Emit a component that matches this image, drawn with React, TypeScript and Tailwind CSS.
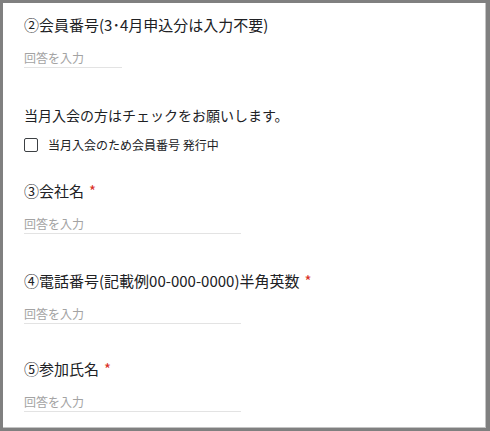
import React from 'react';

const font = { fontFamily: '"Noto Sans CJK JP", "Noto Sans", sans-serif' };

const Required = () => <span className="ml-[5px] text-[15px] text-[#d93025]">*</span>;

const AnswerField = ({ width }: { width: string }) => (
  <div className={`mt-[14px] ${width} h-[19px] border-b border-[#e3e3e3] text-[12px] leading-[18px] text-[#a3a3a3]`}>
    回答を入力
  </div>
);

const Question = ({ title, required = true }: { title: string; required?: boolean }) => (
  <div className="h-[20px] text-[15px] leading-[20px] text-[#202124] whitespace-nowrap">
    {title}
    {required && <Required />}
  </div>
);

const App = () => {
  return (
    <div className="w-[490px] h-[431px] bg-[#808080] pt-[3px] pl-[3px] pr-[4px] pb-[3px]" style={font}>
      <div className="h-full bg-white border-r border-b border-[#c4c4c4] pl-[21px] pt-[12px]">
        <Question title="②会員番号(3･4月申込分は入力不要)" required={false} />
        <AnswerField width="w-[98px]" />

        <div className="mt-[37px] h-[20px] text-[14px] leading-[20px] text-[#202124]">
          当月入会の方はチェックをお願いします。
        </div>
        <label className="mt-[10px] h-[20px] flex items-center gap-[10px]">
          <span className="w-[14px] h-[14px] border-[1.5px] border-[#3c4043] rounded-[2px]" />
          <span className="text-[12px] leading-[20px] text-[#202124]">当月入会のため会員番号 発行中</span>
        </label>

        <div className="mt-[26px]">
          <Question title="③会社名" />
          <AnswerField width="w-[217px]" />
        </div>

        <div className="mt-[37px]">
          <Question title="④電話番号(記載例00-000-0000)半角英数" />
          <AnswerField width="w-[217px]" />
        </div>

        <div className="mt-[35px]">
          <Question title="⑤参加氏名" />
          <AnswerField width="w-[217px]" />
        </div>
      </div>
    </div>
  );
};

export default App;
